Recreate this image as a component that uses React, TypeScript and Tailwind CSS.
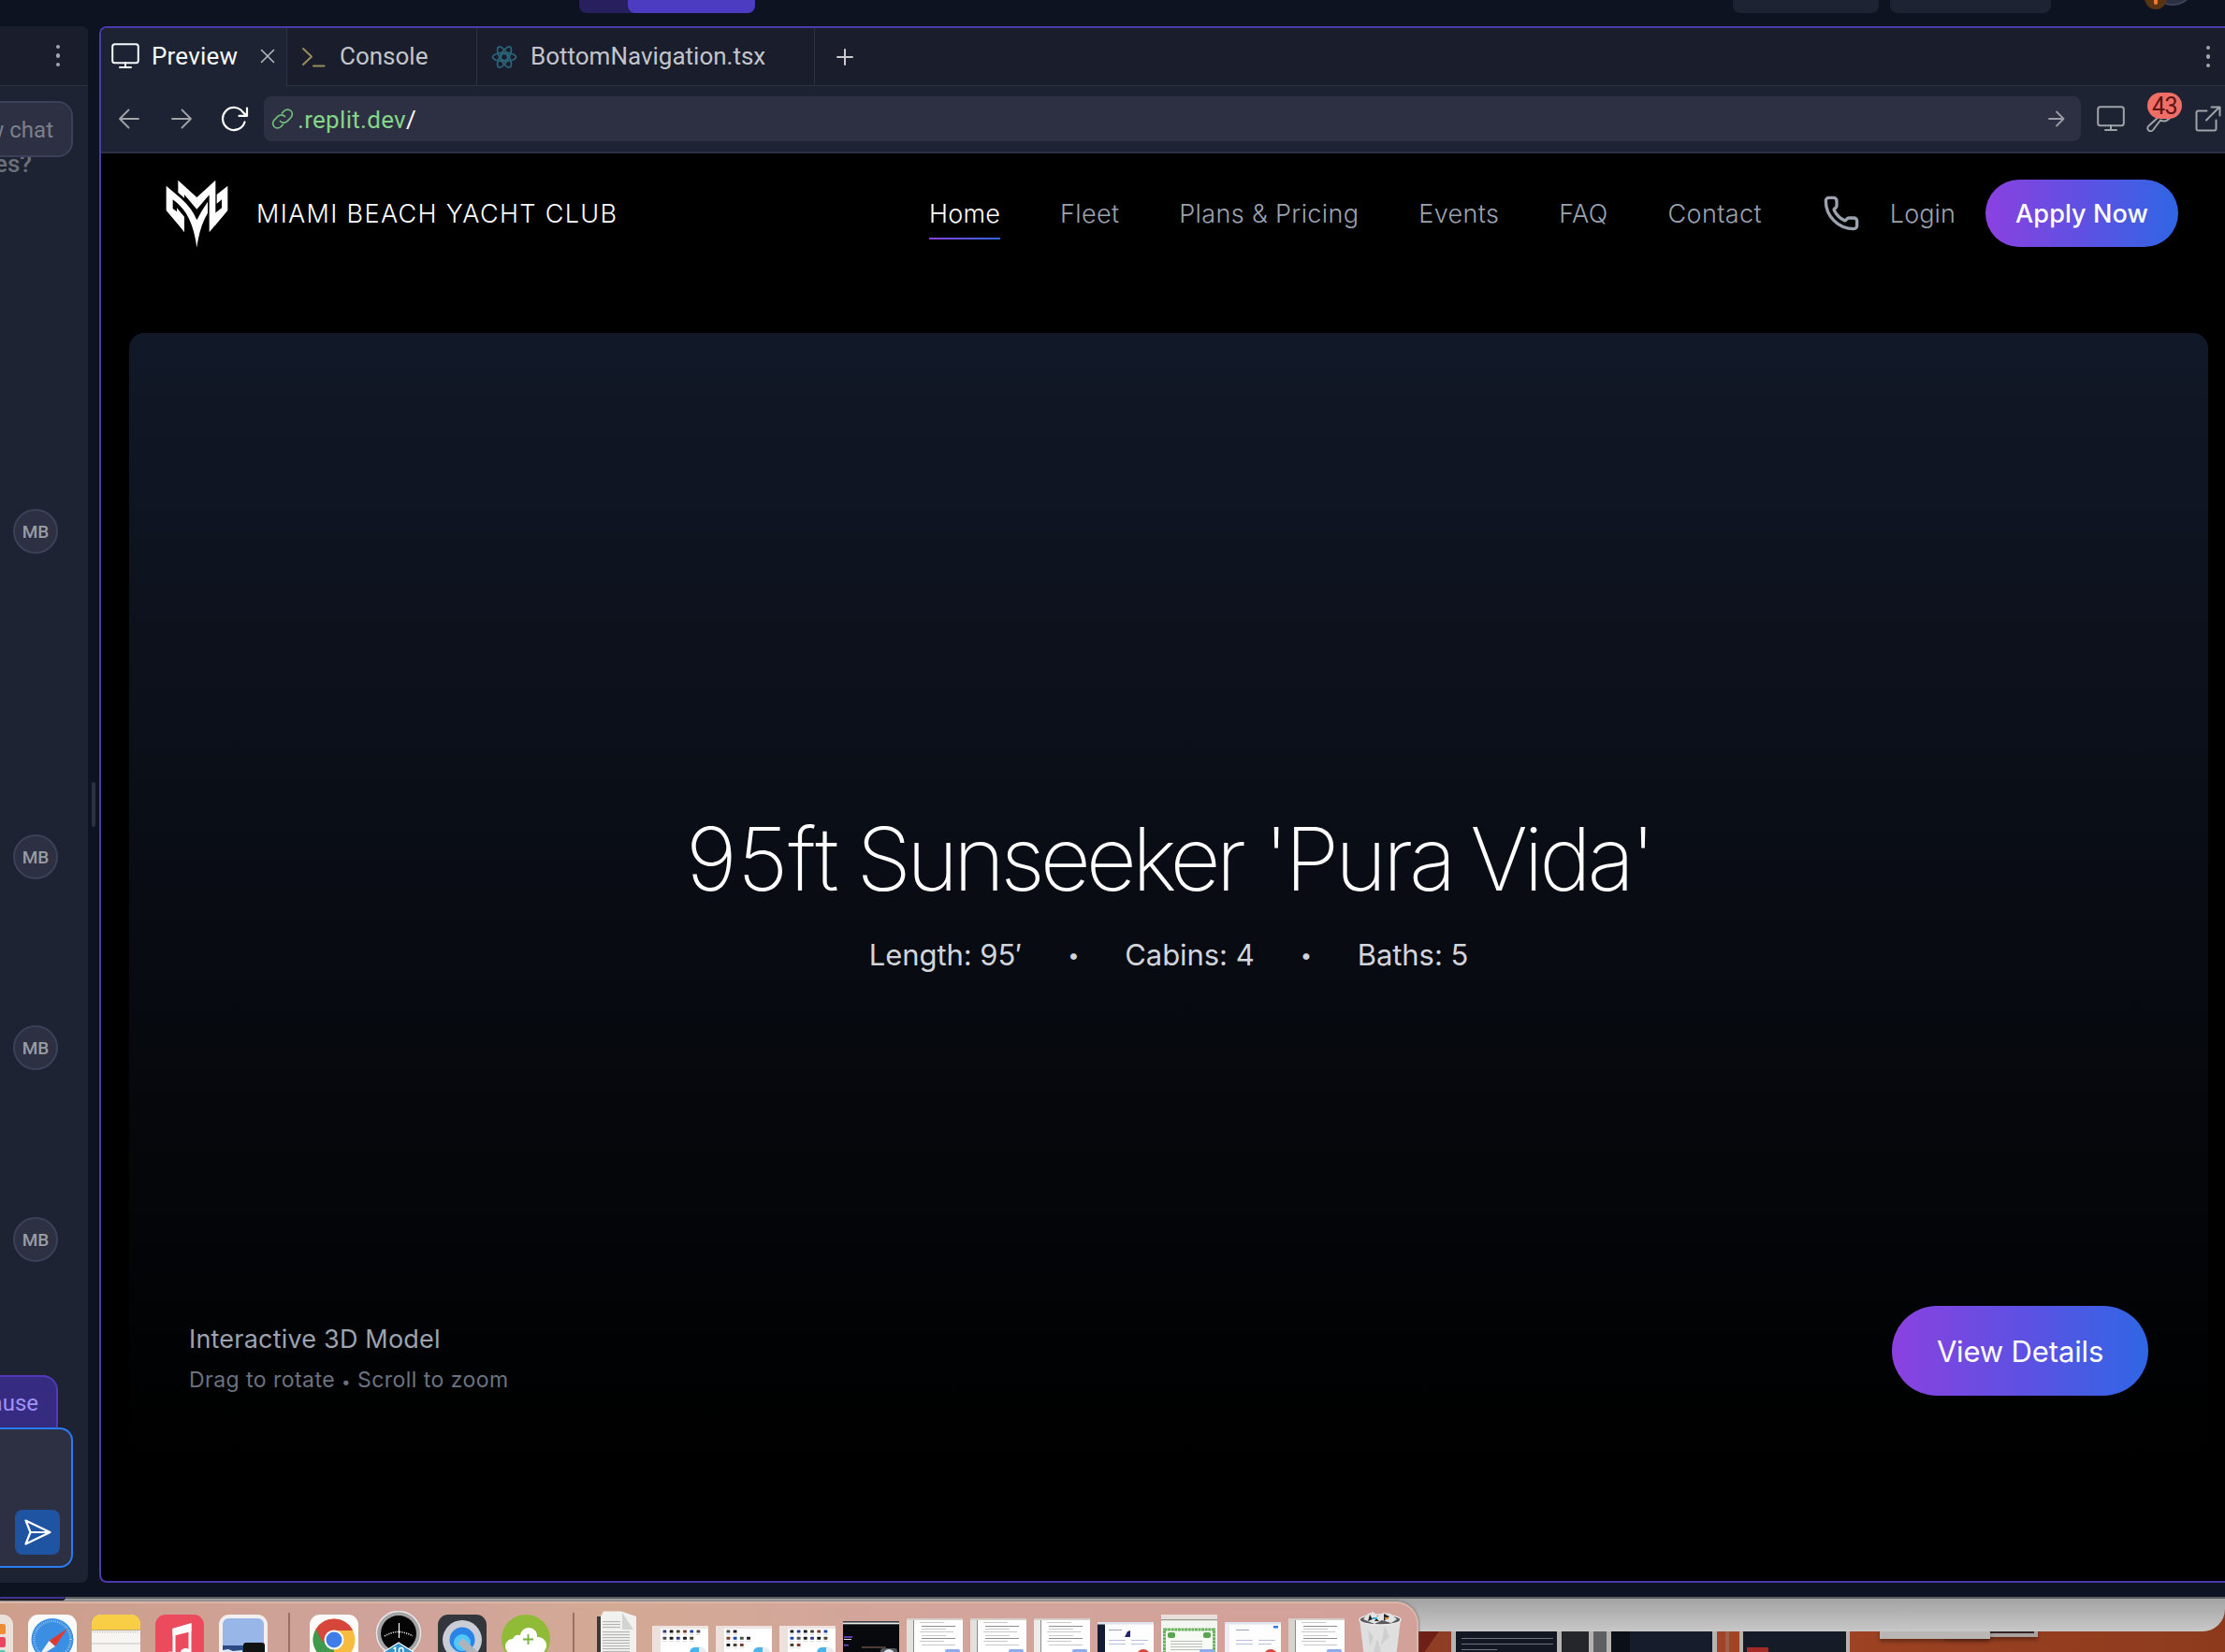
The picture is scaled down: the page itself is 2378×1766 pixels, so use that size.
import type { ReactNode } from "react";
import { Phone } from "lucide-react";

function Dots() {
  return (
    <div className="flex flex-col gap-[5px]">
      <i className="size-[4.5px] rounded-full bg-[#a3a6ab]" />
      <i className="size-[4.5px] rounded-full bg-[#a3a6ab]" />
      <i className="size-[4.5px] rounded-full bg-[#a3a6ab]" />
    </div>
  );
}

function Monitor({ className }: { className: string }) {
  return (
    <svg className={className} width="30" height="28" viewBox="0 0 30 28" fill="none" stroke="currentColor" strokeWidth="2">
      <rect x="1.2" y="1.2" width="27.6" height="20" rx="2.5" />
      <path d="M15 21v5M9 26h12" strokeLinecap="round" />
    </svg>
  );
}

function Line({ d, w, h, className, sw = 2 }: { d: string; w: number; h: number; className: string; sw?: number }) {
  return (
    <svg className={className} width={w} height={h} viewBox={`0 0 ${w} ${h}`} fill="none" stroke="currentColor" strokeWidth={sw} strokeLinecap="round" strokeLinejoin="round">
      <path d={d} />
    </svg>
  );
}

function Logo() {
  return (
    <svg className="h-[73px] w-[68px]" viewBox="231 505 204 219" fill="#fff">
      <path d="M233 525L280 565Q318 600 331 635Q345 606 366 576L366 612Q340 655 331 723Q322 655 297 614Q280 588 254 569L254 598L267 608L267 596L291 624L291 674L278 657L233 604Z" />
      <path d="M271 507L331 562L391 507L391 650L371 674L371 554L331 600L291 553L291 564L271 546Z" />
      <path d="M430 525L430 604L388 654L388 614L411 596L411 569L395 582L395 553Z" />
    </svg>
  );
}

function Avatar({ className }: { className: string }) {
  return (
    <div className={`ml-3.5 flex size-12 shrink-0 items-center justify-center rounded-full border-2 border-[#3c4058] bg-[#2c3042] pt-[3px] text-[19px] font-medium text-[#9a9da2] ${className}`}>
      MB
    </div>
  );
}

function Sidebar() {
  return (
    <aside className="flex h-[1664px] w-[94px] shrink-0 flex-col overflow-hidden rounded-r-lg bg-[#1e2333]">
      <div className="flex h-16 shrink-0 items-center justify-end border-b border-[#2c3143] bg-[#1a1e2c] pr-[30px]">
        <Dots />
      </div>
      <div className="mt-4 flex h-[60px] w-[78px] shrink-0 items-center justify-end rounded-r-2xl border-2 border-l-0 border-[#3c4058] bg-[#2c3042] pt-0.5 pr-[19px] text-[24px] font-[450] text-[#7c7f8b]">
        <span className="whitespace-nowrap">w chat</span>
      </div>
      <div className="flex h-[21px] shrink-0 items-end overflow-hidden text-[26px] leading-[27px] font-medium text-[#6c7079]">
        <span className="ml-[-6px]">es?</span>
      </div>
      <Avatar className="mt-[355px]" />
      <Avatar className="mt-[300px]" />
      <Avatar className="mt-[156px]" />
      <Avatar className="mt-[157px]" />
      <div className="mt-auto flex h-[56px] w-[62px] shrink-0 items-center justify-end rounded-tr-2xl border-t-2 border-r-2 border-[#5238ba] bg-[#352c82] pt-0.5 pr-[19px] text-[24px] font-[450] text-[#a191f6]">
        ause
      </div>
      <div className="mb-4 flex h-[150px] w-[78px] shrink-0 items-end rounded-r-[14px] border-2 border-l-0 border-[#2b7bf0] bg-[#2c3042] pb-3 pl-4">
        <div className="flex size-12 items-center justify-center rounded-lg bg-[#1f54a2]">
          <svg width="30" height="30" viewBox="0 0 30 30" fill="none" stroke="#fff" strokeWidth="2.2" strokeLinejoin="round">
            <path d="M2.500 2.500L28.500 15L2.500 27.500L7.500 15ZM7.500 15H28" />
          </svg>
        </div>
      </div>
    </aside>
  );
}

function Tabs() {
  return (
    <div className="flex h-[62px] shrink-0 bg-[#1a1e2c] text-[26px] font-[450] text-[#c3c5ca]">
      <div className="flex w-[199px] items-center border-r border-[#2c3143] bg-[#1e2333] pb-0.5 pl-[11px] text-[#f5f9fc]">
        <Monitor className="shrink-0" />
        <span className="ml-[13px] w-[116px] tracking-[0.2px]">Preview</span>
        <Line className="shrink-0 text-[#b5b8bd]" w={16} h={16} sw={1.6} d="M1.500 1.500l13 13M14.500 1.500l-13 13" />
      </div>
      <div className="flex w-[203px] items-center border-r border-b border-[#2c3143] pl-[15px]">
        <Line className="shrink-0 text-[#9a8d5c]" w={26} h={22} d="M2 2l9 8.500L2 19M13 20.500h11.500" />
        <span className="ml-[15px]">Console</span>
      </div>
      <div className="flex w-[361px] items-center border-r border-b border-[#2c3143] pl-[15px]">
        <svg className="shrink-0 text-[#2b6379]" width="28" height="28" viewBox="-14 -14 28 28" fill="none" stroke="currentColor" strokeWidth="1.7">
          <circle r="3.600" />
          <ellipse rx="12.500" ry="4.700" />
          <ellipse rx="12.500" ry="4.700" transform="rotate(60)" />
          <ellipse rx="12.500" ry="4.700" transform="rotate(120)" />
        </svg>
        <span className="ml-[14px]">BottomNavigation.tsx</span>
      </div>
      <div className="flex flex-1 items-center border-b border-[#2c3143] pr-[16px] pl-[22px]">
        <Line className="mr-auto text-[#c9cbd0]" w={20} h={20} d="M10 2v16M2 10h16" />
        <Dots />
      </div>
    </div>
  );
}

function Toolbar() {
  return (
    <div className="flex h-[72px] shrink-0 items-center border-b-2 border-[#2c3143] bg-[#1e2333] pl-[18px]">
      <Line className="shrink-0 text-[#a0a3a8]" w={24} h={24} sw={1.8} d="M22 12H2M11.500 2.500L2 12l9.500 9.500" />
      <Line className="ml-8 shrink-0 text-[#a0a3a8]" w={24} h={24} sw={1.8} d="M2 12h20M12.500 2.500L22 12l-9.500 9.500" />
      <svg className="ml-[29px] shrink-0" width="32" height="30" viewBox="0 0 32 30" fill="none" stroke="#fff" strokeWidth="2.2" strokeLinecap="round" strokeLinejoin="round">
        <path d="M26.500 18.500A12 12 0 1 1 25 8.300L29 11.800M29 3.500V11.900H20.500" />
      </svg>
      <div className="ml-[15px] flex h-12 w-[1942px] shrink-0 items-center rounded-lg bg-[#2c3042] pr-[16px] pl-2 text-[26px] font-[450]">
        <svg className="shrink-0" width="24" height="24" viewBox="0 0 24 24" fill="none" stroke="#70bd78" strokeWidth="1.700" strokeLinecap="round">
          <path d="M9.500 14.500a5 5 0 0 0 7.200.3l4.200-4.200a5 5 0 0 0-7.100-7.100L11.500 5.800" />
          <path d="M14.500 9.500a5 5 0 0 0-7.200-.3L3.100 13.400a5 5 0 0 0 7.100 7.100l2.300-2.300" />
        </svg>
        <span className="ml-1 pt-0.5 tracking-[0.3px] text-[#86d588]">.replit.dev</span>
        <span className="pt-0.5 text-white">/</span>
        <Line className="ml-auto text-[#9a9da5]" w={20} h={20} sw={1.8} d="M2 10h15.500M10 2.500L17.500 10L10 17.500" />
      </div>
      <Monitor className="ml-[17px] shrink-0 text-[#a0a3a8]" />
      <div className="relative ml-[23px] flex h-[28px] w-9 shrink-0 items-center">
        <svg width="30" height="28" viewBox="0 0 30 28" fill="none" stroke="#a0a3a8" strokeWidth="2" strokeLinejoin="round">
          <path d="M26 8a7.500 7.500 0 0 1-11 7.500L7 26a3 3 0 0 1-5-4L13 12a7.500 7.500 0 0 1 8-10" />
        </svg>
        <div className="absolute top-[-14px] left-[1px] flex h-[28px] w-[37px] items-center justify-center rounded-full bg-[#ef6e66] pt-[2px] text-[25px] tracking-[-0.5px] text-[#5d1412]">
          43
        </div>
      </div>
      <Line className="ml-[16px] shrink-0 text-[#a0a3a8]" w={28} h={28} d="M12.500 5.500H3.500a2 2 0 0 0-2 2V24.500a2 2 0 0 0 2 2H20.500a2 2 0 0 0 2-2V15.500M12 15.500L26 1.500M17.500 1.500H26.500V10.500" />
    </div>
  );
}

const NAV = ["Fleet", "Plans & Pricing", "Events", "FAQ", "Contact"];

function SiteHeader() {
  return (
    <header className="flex h-[128px] shrink-0 items-center pr-[50px] pl-[69px] text-[27px] font-light tracking-[0.35px] text-[#9ca3af]">
      <Logo />
      <span className="ml-[29px] pt-0.5 tracking-[1.34px] text-white">MIAMI BEACH YACHT CLUB</span>
      <nav className="ml-auto flex gap-16 pt-0.5">
        <div className="relative tracking-[0.2px] text-white">
          Home
          <i className="absolute inset-x-0 bottom-[-7px] h-0.5 bg-[linear-gradient(90deg,#8b41e0,#2f66e4)]" />
        </div>
        {NAV.map((n) => (
          <span key={n}>{n}</span>
        ))}
      </nav>
      <Phone className="ml-[65px] shrink-0" size={40} strokeWidth={2} />
      <span className="ml-8 pt-0.5 tracking-[0.1px]">Login</span>
      <button className="ml-8 h-[72px] w-[206px] shrink-0 rounded-full bg-[linear-gradient(90deg,#8b41e0,#5a52e2_55%,#2f66e4)] pt-0.5 font-medium tracking-[0.1px] text-white">
        Apply Now
      </button>
    </header>
  );
}

function Hero() {
  return (
    <section className="mt-16 ml-[30px] flex h-[1200px] w-[2222px] shrink-0 flex-col rounded-2xl bg-[linear-gradient(180deg,#111827,#000)]">
      <div className="mt-[502px] text-center">
        <h1 className="flex justify-center text-[94px] leading-[121px] font-extralight text-white">
          <span>95ft</span>
          <span className="ml-[19px] tracking-[-5px]">Sunseeker</span>
          <span className="ml-[24px] tracking-[-4.2px]">'Pura</span>
          <span className="ml-[19px] tracking-[-4.4px]">Vida'</span>
        </h1>
        <div className="mt-[18px] flex justify-center gap-[49px] text-[31px] leading-[48px] tracking-[-0.05px] text-[#d1d5db]">
          <span>Length: 95′</span>
          <span className="w-3 text-[22px]">•</span>
          <span>Cabins: 4</span>
          <span className="w-3 text-[22px]">•</span>
          <span>Baths: 5</span>
        </div>
      </div>
      <div className="mt-auto mb-16 flex items-end justify-between px-16">
        <div>
          <p className="text-[27px] leading-[40px] tracking-[0.2px] text-[#9ca3af]">Interactive 3D Model</p>
          <p className="mt-[9px] text-[23px] leading-[29px] tracking-[0.46px] text-[#6b7280]">
            Drag to rotate <span className="text-[17px]">•</span> Scroll to zoom
          </p>
        </div>
        <button className="h-24 w-[274px] rounded-full bg-[linear-gradient(90deg,#8b41e0,#5a52e2_55%,#2f66e4)] pt-0.5 text-[31px] tracking-[-0.15px] text-white">
          View Details
        </button>
      </div>
    </section>
  );
}

function Tile({ w = 52, children, className = "" }: { w?: number; children: ReactNode; className?: string }) {
  return (
    <svg className={`shrink-0 ${className}`} width={w} height="44" viewBox={`0 0 ${w} 44`}>
      {children}
    </svg>
  );
}

const FILES = ["#2e3a8c", "#1b4bb0", "#17181c", "#4a4d55", "#4a4334", "#1d1e22", "#7d3b2e"];

function FinderThumb({ rows, seed = 0 }: { rows: number[]; seed?: number }) {
  return (
    <Tile w={60}>
      <rect y="16" width="60" height="30" fill="#fff" />
      <rect y="16" width="60" height="3" fill="#efe3df" />
      <rect y="16" width="9" height="30" fill="#ece1dd" />
      {rows.map((n, r) =>
        Array.from({ length: n }, (_, i) => (
          <g key={`${r}-${i}`}>
            <rect x={11.500 + i * 7.2} y={20.500 + r * 7.300} width="3.800" height="3" rx=".5" fill={FILES[(i * 2 + r * 3 + seed) % 7]} />
            <rect x={11 + i * 7.2} y={24.800 + r * 7.300} width="4.800" height=".7" fill="#cfcfcf" />
          </g>
        ))
      )}
      <path d="M40 44q1-5 6-5h5v5z" fill="#49b3ec" />
      <path d="M50 44v-5h3q5 1 5 5z" fill="#e9ecef" />
    </Tile>
  );
}

function DocThumb({ side = "#e4e0dc" }: { side?: string }) {
  return (
    <Tile w={60}>
      <rect y="8" width="60" height="36" fill="#fff" />
      <rect y="8" width="60" height="2" fill="#d9cdc8" />
      <rect y="10" width="7" height="36" fill={side} />
      <rect x="7" y="10" width="1" height="36" fill="#8d8a88" />
      {[4, 8, 11, 14, 18, 21, 24, 28].map((y, i) => (
        <rect key={y} x={14 + (i % 3 === 0 ? 0 : 2)} y={8 + y} width={i % 2 ? 36 : 26} height="1" fill={i % 4 === 1 ? "#8d8d8d" : "#c8c8c8"} />
      ))}
      <rect x="41" y="41" width="16" height="6" rx="2" fill="#8cabe8" />
    </Tile>
  );
}

function WebThumb({ dark }: { dark: boolean }) {
  return (
    <Tile w={60}>
      <rect y="12" width="60" height="34" fill="#fdfdfe" />
      <rect y="12" width="60" height="2.500" fill="#dfe4ee" />
      <rect y="14.500" width={dark ? 8 : 5} height="32" fill={dark ? "#131a33" : "#eceef3"} />
      <rect x="12" y="20" width="14" height="1" fill="#9aa5bf" />
      <rect x="12" y="31" width="18" height="1" fill="#b7c3dc" />
      <rect x="12" y="35" width="18" height="1" fill="#b7c3dc" />
      <rect x="36" y="31" width="18" height="1" fill="#b7c3dc" />
      <rect x="36" y="35" width="14" height="1" fill="#b7c3dc" />
      {dark ? <path d="M29 28l3-6 3-1v7z" fill="#23246e" /> : <rect x="52" y="16" width="5" height="2.500" fill="#3478d8" />}
      <circle cx="49" cy="48.500" r="7.500" fill="#d8483a" />
    </Tile>
  );
}

function Dock() {
  return (
    <div className="relative flex h-[54px] w-[1516px] items-start overflow-hidden rounded-tr-[24px] border-t-2 border-r-2 border-[#dcb5a6] bg-[linear-gradient(90deg,#cd9f8b,#cfa39b_28%,#d3aa94_43%,#d3a59b_62%,#d2a199)] pt-[8px] shadow-[0_0_3px_#555]">
      <Tile w={14} className="mr-4">
        <rect x="-38" y="4" width="52" height="52" rx="11" fill="#ece0da" />
        <rect x="-4" y="14" width="10" height="11" rx="2.500" fill="#ee8d33" />
        <rect x="-4" y="28" width="10" height="11" rx="2.500" fill="#e9475f" />
        <rect x="-4" y="42" width="10" height="10" rx="2.500" fill="#5cc8b0" />
      </Tile>
      <Tile className="mr-4">
        <rect y="4" width="52" height="52" rx="11" fill="#fbfbfb" />
        <circle cx="26" cy="30.500" r="22.500" fill="#3b8fe2" />
        <circle cx="26" cy="30.500" r="19.500" fill="none" stroke="#a8d2f5" strokeWidth="2.500" strokeDasharray=".7 1.500" />
        <path d="M42 19L22.500 32L29 38Z" fill="#e0392f" />
        <path d="M10 50L22.500 32L29 38Z" fill="#f1f1f1" />
      </Tile>
      <Tile className="mr-4">
        <rect y="4" width="52" height="52" rx="11" fill="#f7f5f1" />
        <path d="M0 20V15Q0 4 11 4H41Q52 4 52 15V20Z" fill="#f8ce46" />
        <path d="M0 20.500H52" stroke="#bda86a" />
        <path d="M1 22.500H51" stroke="#b9b6b0" strokeWidth="1.500" strokeDasharray="1 1.500" />
        <path d="M0 35H52" stroke="#d5d3ce" strokeWidth="1.500" />
      </Tile>
      <Tile className="mr-4">
        <rect y="4" width="52" height="52" rx="11" fill="#ec4a5d" />
        <path d="M20 50V20L37 15V46" fill="none" stroke="#fff" strokeWidth="3" />
        <path d="M18.500 19L38.500 13.500V22L18.500 27Z" fill="#fff" />
        <ellipse cx="16" cy="48" rx="5.500" ry="4.500" fill="#fff" />
        <ellipse cx="32.500" cy="44.500" rx="5.500" ry="4.500" fill="#fff" />
      </Tile>
      <Tile className="mr-[22px]">
        <rect y="4" width="52" height="52" rx="11" fill="#f2f0ef" />
        <path d="M4 50V15Q4 8 11 8H41Q48 8 48 15V50Z" fill="#98b6e8" />
        <path d="M4 37H48V50H4Z" fill="#2c4a84" />
        <path d="M4 42l6-1 5 2 10-1v3H4z" fill="#dfe7f2" />
        <rect x="26" y="34" width="23" height="12" rx="3" fill="#111214" />
      </Tile>
      <i className="mt-0.5 mr-[21px] h-11 w-0.5 shrink-0 bg-[#9d6f60]" />
      <Tile className="mr-[18px]">
        <rect y="4" width="52" height="52" rx="11" fill="#fdfcfb" />
        <circle cx="26" cy="31" r="22.500" fill="#f6bb3f" />
        <path d="M26 31L6.500 19.700A22.500 22.500 0 0 0 14.800 50.500L26 48Z" fill="#3f9a4e" />
        <path d="M6.500 19.700A22.500 22.500 0 0 1 45.500 19.700L46 21H26L14.500 34Z" fill="#d7463a" />
        <circle cx="26" cy="31" r="10.500" fill="#fff" />
        <circle cx="26" cy="31" r="8.500" fill="#3f7ee8" />
      </Tile>
      <Tile w={50} className="mr-[17px]">
        <circle cx="25" cy="24" r="23.500" fill="#a5a4a4" stroke="#e6e6e6" strokeWidth="1.500" />
        <circle cx="25" cy="24" r="19" fill="#050505" />
        <path d="M10 27q15-9 30 0" fill="none" stroke="#e4e4e4" strokeWidth="1.600" strokeDasharray="1.200 1.200" />
        <path d="M25.500 13V29" stroke="#fff" strokeWidth="1.200" />
        <path d="M25 34L49 49H1Z" fill="#3391cc" stroke="#fff" strokeWidth="1.200" />
        <path d="M19.500 40.500l2-1V46M25.500 46V42q0-2.500 2.200-2.500T30 42v4" fill="none" stroke="#fff" strokeWidth="1.500" />
      </Tile>
      <Tile className="mr-4">
        <rect y="4" width="52" height="52" rx="11" fill="#33363b" />
        <circle cx="26" cy="31" r="21" fill="#c9ced6" />
        <circle cx="26" cy="31" r="13.500" fill="#2c83e6" />
        <circle cx="26" cy="34" r="9" fill="#4fc8fa" />
        <path d="M24 32L43 50" stroke="#aeb3bb" strokeWidth="8" />
      </Tile>
      <Tile className="mr-[24px]">
        <circle cx="26" cy="30" r="26" fill="#8fbb36" />
        <path d="M12 46a8 8 0 0 1 0-16a7 7 0 0 1 8-4a9 9 0 0 1 18 2a9 9 0 0 1 2 18z" fill="#fff" />
        <path d="M28.500 25v11M23 30.500h11" stroke="#74b23a" strokeWidth="1.800" />
      </Tile>
      <i className="mt-0.5 mr-6 h-11 w-0.5 shrink-0 bg-[#9d6f60]" />
      <Tile w={43} className="mr-[16px]">
        <path d="M0 6h6v40H0z" fill="#3a3a3a" />
        <path d="M4 6L7 0.500H26L42 6V46H4Z" fill="#f1f1f0" />
        <path d="M27 2L39 20H27Z" fill="#d3d3d3" />
        {[11, 14, 17, 22, 25, 28, 31, 34, 37, 40, 43].map((y) => (
          <rect key={y} x="6" y={y} width={y < 20 ? 19 : 29} height="1.100" fill="#b4b4b4" />
        ))}
      </Tile>
      <div className="flex gap-2">
        <FinderThumb rows={[6, 5]} />
        <FinderThumb rows={[2, 4, 3]} seed={3} />
        <FinderThumb rows={[6, 6, 2]} seed={5} />
        <Tile w={60}>
          <rect y="11" width="60" height="36" fill="#07090d" />
          <rect y="11" width="60" height="1.500" fill="#3a3f4a" />
          <rect y="12.500" width="60" height="1.800" fill="#e7ebe8" />
          <rect x="1" y="27" width="9" height="2" fill="#5b3aa8" />
          <rect x="1" y="30" width="8" height="1" fill="#dcdcdc" />
          <rect x="1" y="36" width="5" height="1.500" fill="#7c4ae0" />
          <rect x="20" y="38" width="26" height="2" fill="#4e3b35" />
          <rect x="40" y="40" width="18" height="8" rx="3" fill="#53565c" />
          <circle cx="49" cy="47" r="6" fill="#dfe6f2" />
        </Tile>
        <DocThumb />
        <DocThumb />
        <DocThumb side="#ececec" />
        <WebThumb dark />
        <Tile w={60}>
          <rect y="4" width="60" height="42" fill="#f4f6f1" />
          <rect y="4" width="60" height="5" fill="#e9dedb" />
          <rect y="9" width="60" height="1.200" fill="#8f9a8a" />
          <rect x="3.500" y="20" width="53" height="30" fill="#f7faf5" stroke="#69b15c" strokeWidth="3" strokeDasharray="3 .6" />
          <rect x="7" y="23" width="8" height="6" rx="2" fill="#5ba552" />
          <rect x="45" y="23" width="8" height="6" rx="2" fill="#5ba552" />
          {[32, 35, 38, 41].map((y) => (
            <rect key={y} x="10" y={y} width="34" height="1" fill="#b9beb6" />
          ))}
          <rect x="41" y="41" width="16" height="6" rx="2" fill="#8cabe8" />
        </Tile>
        <WebThumb dark={false} />
        <DocThumb side="#d8d2ce" />
      </div>
      <Tile w={46} className="ml-[15px]">
        <path d="M1 9L6 50H40L45 9Z" fill="#dfdfdf" />
        <path d="M10 20l6 8-4 10zM28 16l5 12-9 8zM20 30l4 14h-8z" fill="#cfcfd0" />
        <ellipse cx="23" cy="9.500" rx="22" ry="5.500" fill="#5a5a5c" stroke="#ececec" strokeWidth="1.500" />
        <path d="M5 9l5-6 6-2 4 5 6-4 8 1 7 6-6 4-10-3-8 4z" fill="#e3e3e3" />
        <path d="M12 4l3 5-5 2zM27 3l6 3-6 5zM19 8l3 3h-5z" fill="#26282c" />
        <path d="M15 7h5v2h-5z" fill="#3ca9d8" />
        <path d="M28 7h4v2h-4z" fill="#e08a2c" />
      </Tile>
    </div>
  );
}

function Desktop() {
  return (
    <div className="relative h-[59px] overflow-hidden bg-[linear-gradient(90deg,#a04425,#a04425_80%,#8d3a1c)]">
      <div className="absolute top-[37px] left-[1514px] h-[22px] w-[37px] bg-[linear-gradient(125deg,#6f1f16_45%,#8f3d24_46%)]" />
      <div className="absolute top-[30px] left-[1551px] flex h-[29px] w-[284px] gap-[5px] bg-[#b5b2b0] pr-1 pl-[5px]">
        <div className="flex w-[108px] flex-col gap-[5px] bg-[#131724] pt-[14px] pl-1.5">
          <i className="h-px w-[98px] bg-[#6d727d]" />
          <i className="h-px w-[98px] bg-[#6d727d]" />
          <i className="h-px w-[38px] bg-[#6d727d]" />
        </div>
        <div className="w-[29px] bg-[#24262b]" />
        <div className="w-[14px] bg-[#5d5f63]" />
        <div className="w-[108px] border-l-[20px] border-[#0b0f18] bg-[#161c2b]" />
      </div>
      <div className="absolute top-[30px] left-[1844px] h-[29px] w-[4px] bg-[#a0604a]" />
      <div className="absolute top-[30px] left-[1859px] flex h-[29px] w-[118px] items-end bg-[#b5b2b0] pr-1 pl-1">
        <div className="flex h-full w-full items-end bg-[#161b28] pl-1">
          <i className="h-[5px] w-[23px] bg-[#a32c26]" />
        </div>
      </div>
      <div className="absolute top-[30px] left-[2078px] h-[13px] w-[100px] border-4 border-t-0 border-[#a9a19d] bg-[#30262a] shadow-[0_3px_4px_#0005]" />
      <div className="absolute top-[30px] left-[2009px] h-[15px] w-[118px] border-[5px] border-t-0 border-b-[8px] border-[#b9b6b3] bg-[#0b0c10] shadow-[0_3px_4px_#0005]" />
      <div className="absolute inset-x-0 top-0 h-[37px] rounded-br-[24px] border-t-2 border-[#5b5c5e] bg-[linear-gradient(180deg,#a3a3a3,#c8c8c8)]" />
      <div className="absolute top-0 left-0 h-[4px] w-[70px] rounded-br-lg border-b-2 border-[#15131f] bg-[#3f3490]" />
      <div className="absolute top-[5px] left-0">
        <Dock />
      </div>
    </div>
  );
}

export default function App() {
  return (
    <div className="flex h-[1766px] w-[2378px] flex-col overflow-hidden bg-[#0e1322] font-[Roboto,sans-serif]">
      <div className="flex h-[14px] shrink-0 pl-[619px]">
        <div className="w-[188px] rounded-b-lg bg-[#281f5e] pl-[52px]">
          <div className="h-full rounded-b-lg bg-[#4c3cc2]" />
        </div>
        <div className="ml-[1045px] w-[156px] rounded-b-lg bg-[#1e2333]" />
        <div className="ml-3 w-[172px] rounded-b-lg bg-[#1e2333]" />
        <div className="relative ml-[100px] w-[48px]">
          <i className="absolute top-[-42px] left-[6px] size-12 rounded-full border-2 border-[#3c4058] bg-[#2c3042]" />
          <i className="absolute top-[-14px] left-0 size-6 rounded-full bg-[#5a3312]" />
          <i className="absolute top-[-8px] left-[10px] h-[13px] w-1 rounded-b-full bg-[#f07a2c]" />
        </div>
      </div>
      <div className="mt-[14px] flex h-[1679px] shrink-0">
        <Sidebar />
        <div className="flex w-3 shrink-0 pt-[808px] pl-1">
          <i className="h-12 w-1 rounded-full bg-[#2c3042]" />
        </div>
        <main className="flex h-[1664px] w-[2272px] shrink-0 flex-col overflow-hidden rounded-l-lg border-2 border-r-0 border-[#4a3aab] bg-black">
          <Tabs />
          <Toolbar />
          <div className="flex flex-1 flex-col font-[Inter,sans-serif]">
            <SiteHeader />
            <Hero />
          </div>
        </main>
      </div>
      <Desktop />
    </div>
  );
}
